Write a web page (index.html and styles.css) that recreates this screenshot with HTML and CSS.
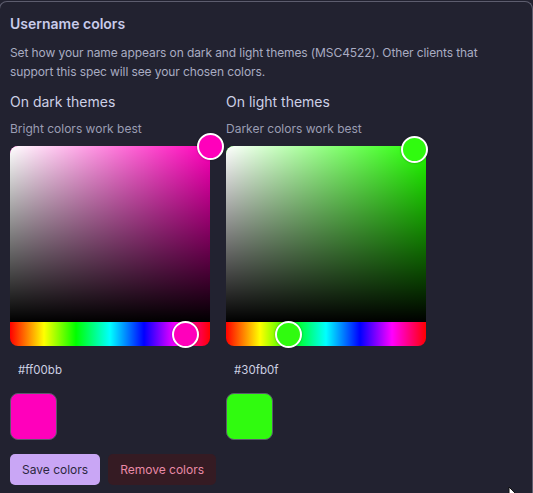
FILE: index.html
```html
<!DOCTYPE html>
<html lang="en">
<head>
  <meta charset="UTF-8" />
  <meta name="viewport" content="width=device-width, initial-scale=1.0" />
  <title>Username colors</title>
  <link rel="stylesheet" href="styles.css">
</head>
<body>
  <div class="card">
    <h2 class="card-title">Username colors</h2>
    <p class="card-desc">Set how your name appears on dark and light themes (MSC4522). Other clients that support this spec will see your chosen colors.</p>

    <div class="themes">
      <div class="theme">
        <h3>On dark themes</h3>
        <p class="hint">Bright colors work best</p>
        <div class="picker">
          <div class="picker-box">
            <div class="sat" style="background-color: hsl(316, 100%, 50%);"></div>
            <div class="hue"></div>
          </div>
          <span class="thumb" style="left: 100%; top: 0; background: #ff00bb;"></span>
          <span class="thumb" style="left: 87.8%; top: 188px; background: #ff00bb;"></span>
        </div>
        <input class="hex" type="text" value="#ff00bb" />
        <div class="swatch" style="background: #ff00bb;"></div>
      </div>

      <div class="theme">
        <h3>On light themes</h3>
        <p class="hint">Darker colors work best</p>
        <div class="picker">
          <div class="picker-box">
            <div class="sat" style="background-color: hsl(112, 100%, 50%);"></div>
            <div class="hue"></div>
          </div>
          <span class="thumb" style="left: 94%; top: 3px; background: #30fb0f;"></span>
          <span class="thumb" style="left: 31%; top: 188px; background: #30fb0f;"></span>
        </div>
        <input class="hex" type="text" value="#30fb0f" />
        <div class="swatch" style="background: #30fb0f;"></div>
      </div>
    </div>

    <div class="actions">
      <button class="btn btn-save">Save colors</button>
      <button class="btn btn-remove">Remove colors</button>
    </div>
  </div>

  <!-- mouse pointer -->
  <svg class="pointer" width="14" height="20" viewBox="0 0 14 20">
    <path d="M1 1 L1 16 L4.5 12.5 L7 18 L9 17 L6.6 11.6 L11.5 11.6 Z" fill="#fff" stroke="#111" stroke-width="1"/>
  </svg>
</body>
</html>
```

FILE: styles.css
```css
* {
  margin: 0;
  padding: 0;
  box-sizing: border-box;
}

body {
  font-family: Inter, 'Noto Sans', sans-serif;
  background: #222230;
  color: #c9cbe0;
  overflow: hidden;
  height: 100vh;
}

.card {
  margin: 1px 0 0 -1px;
  border: 1px solid #5d5d6e;
  border-bottom: none;
  border-radius: 8px 8px 0 0;
  padding: 12px 10px 0;
  min-height: 500px;
}

.card-title {
  font-size: 14px;
  line-height: 20px;
  font-weight: 600;
  color: #c8cbea;
}

.card-desc {
  margin-top: 9px;
  font-size: 12px;
  line-height: 19px;
  letter-spacing: -0.1px;
  color: #a9acc2;
}

.themes {
  display: flex;
  gap: 16px;
  margin-top: 11px;
}

.theme {
  width: 200px;
}

.theme h3 {
  font-size: 14px;
  line-height: 20px;
  font-weight: 400;
  color: #cdd0e6;
}

.hint {
  margin-top: 9px;
  font-size: 12px;
  line-height: 16px;
  color: #9a9db3;
}

.picker {
  position: relative;
  margin-top: 9px;
  width: 200px;
  height: 200px;
}

.picker-box {
  border-radius: 8px;
  overflow: hidden;
  height: 100%;
}

.sat {
  height: 176px;
  background-image:
    linear-gradient(to bottom, rgba(0, 0, 0, 0) 0%, #000 100%),
    linear-gradient(to right, #fff 0%, rgba(255, 255, 255, 0) 100%);
}

.hue {
  height: 24px;
  background: linear-gradient(to right, #f00 0%, #ff0 17%, #0f0 33%, #0ff 50%, #00f 67%, #f0f 83%, #f00 100%);
}

.thumb {
  position: absolute;
  width: 27px;
  height: 27px;
  margin: -13.5px 0 0 -13.5px;
  border: 2px solid #fff;
  border-radius: 50%;
  box-shadow: 0 0 2px rgba(0, 0, 0, 0.4);
}

.hex {
  display: block;
  width: 100%;
  height: 32px;
  margin-top: 8px;
  padding: 0 8px;
  background: transparent;
  border: none;
  outline: none;
  font-family: inherit;
  font-size: 11.5px;
  color: #cdd0e2;
}

.swatch {
  width: 47px;
  height: 47px;
  margin-top: 7px;
  border: 1px solid #5a5a6c;
  border-radius: 8px;
}

.actions {
  display: flex;
  gap: 8px;
  margin-top: 14px;
}

.btn {
  height: 31px;
  padding: 0 12px;
  border: none;
  border-radius: 5px;
  font-family: inherit;
  font-size: 12px;
  cursor: pointer;
}

.btn-save {
  background: #c9a6f5;
  color: #2c2640;
}

.btn-remove {
  background: #351b23;
  color: #e98aa7;
}

.pointer {
  position: absolute;
  left: 508px;
  top: 486px;
}
```
